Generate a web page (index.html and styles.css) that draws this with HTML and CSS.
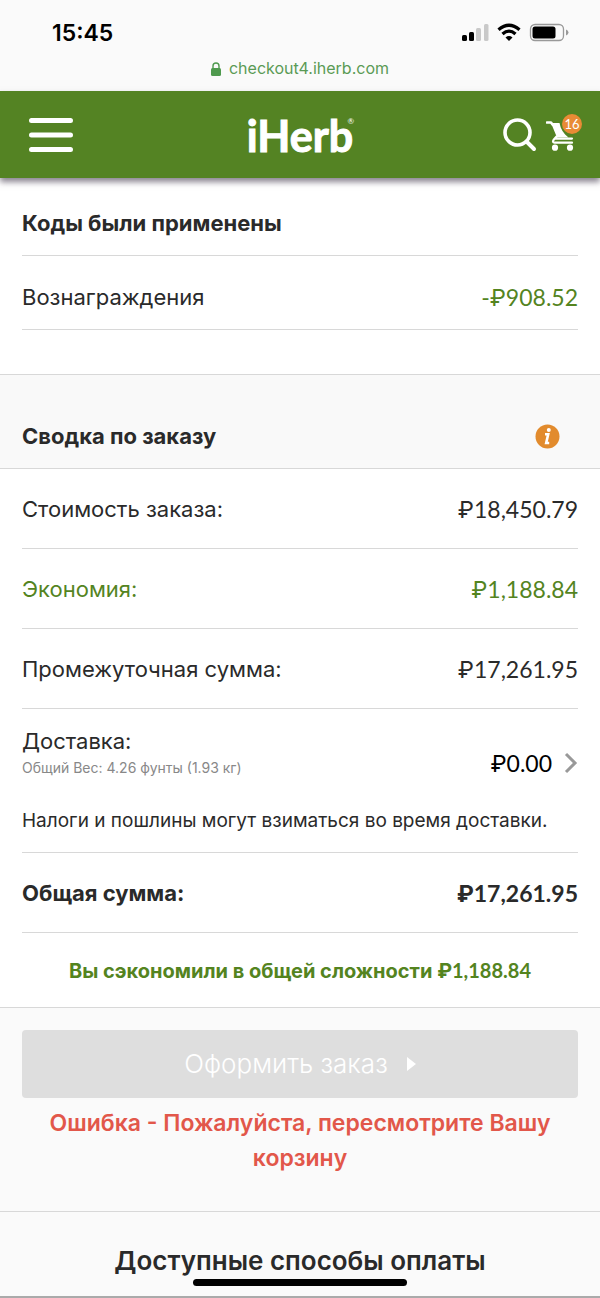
FILE: index.html
```html
<!DOCTYPE html>
<html lang="ru">
<head>
<meta charset="utf-8">
<meta name="viewport" content="width=device-width, initial-scale=1">
<title>iHerb</title>
<link rel="stylesheet" href="styles.css">
</head>
<body>
<div class="device-bar">
  <div class="status">
    <span class="time">15:45</span>
    <svg class="status-icons" width="108" height="20" viewBox="0 0 108 20" aria-hidden="true">
      <rect x="1" y="12" width="5" height="6" rx="1.5"/>
      <rect x="8" y="9" width="5" height="9" rx="1.5"/>
      <g fill="#c9c9c9"><rect x="15" y="5" width="5" height="13" rx="1.5"/><rect x="23" y="1" width="4.500" height="17" rx="1.500"/></g>
      <g fill="none" stroke="#000" stroke-width="3.300"><path d="M37.500 6.800Q48 -2.200 58.500 6.800"/><path d="M41.500 11Q48 5.200 54.500 11"/></g>
      <path d="M44.500 14.400Q48 11.600 51.500 14.400L48 18Z"/>
      <rect x="69.500" y="1.500" width="33" height="16" rx="4.500" fill="none" stroke="#999" stroke-width="1.300"/>
      <rect x="71.500" y="3.500" width="23" height="12" rx="2.500"/>
      <path d="M105 6.500Q107.500 7.500 107.500 9.500T105 12.500Z" fill="#999"/>
    </svg>
  </div>
  <div class="address">
    <svg width="10" height="14" viewBox="0 0 10 14" aria-hidden="true"><rect y="6" width="10" height="8" rx="1.500" fill="#4f9a4e"/><path d="M2 7V4a3 3 0 0 1 6 0v3" fill="none" stroke="#4f9a4e" stroke-width="1.400"/></svg>
    <span>checkout4.iherb.com</span>
  </div>
</div>
<header class="header">
  <button class="icon-button" type="button" aria-label="Меню">
    <svg width="44" height="36" viewBox="0 0 44 36"><path d="M2.500 3.500h39M2.500 18h39M2.500 32.500h39" stroke="#fff" stroke-width="5" stroke-linecap="round"/></svg>
  </button>
  <a class="logo" href="#">iHerb<sup>®</sup></a>
  <div class="tools">
    <button class="icon-button" type="button" aria-label="Поиск">
      <svg width="34" height="34" viewBox="0 0 34 34"><circle cx="14.500" cy="14.500" r="12.500" fill="none" stroke="#fff" stroke-width="3.600"/><path d="M23.500 23.500l7.500 7.500" stroke="#fff" stroke-width="4" stroke-linecap="round"/></svg>
    </button>
    <a class="cart" href="#" aria-label="Корзина">
      <svg width="30" height="32" viewBox="0 0 30 32"><path d="M1 3.500h4l1.500 2" fill="none" stroke="#fff" stroke-width="2.600" stroke-linecap="round" stroke-linejoin="round"/><path d="M5 4h8.500c1 6 4 10.500 9 14.500H11z" fill="#fff"/><path d="M10.500 17.500L7.500 21c-1 1.500-.5 2.700 1 2.700H26M9.500 19.600H26" fill="none" stroke="#fff" stroke-width="2.200" stroke-linecap="round"/><circle cx="9" cy="28.700" r="3.100" fill="#fff"/><circle cx="24" cy="28.700" r="3.100" fill="#fff"/></svg>
      <span class="badge">16</span>
    </a>
  </div>
</header>
<main>
  <section class="codes">
    <h2 class="codes-title">Коды были применены</h2>
    <div class="reward"><span>Вознаграждения</span><span class="amount green">-₽908.52</span></div>
  </section>
  <div class="summary-head">
    <h2>Сводка по заказу</h2>
    <button class="icon-button" type="button" aria-label="Информация">
      <svg width="25" height="25" viewBox="0 0 25 25"><circle cx="12.500" cy="12.500" r="12" fill="#e28b2d"/><circle cx="13.800" cy="6" r="2" fill="#fff"/><path d="M10 10.300h3.200l-2 8.700h3" fill="none" stroke="#fff" stroke-width="2.600"/></svg>
    </button>
  </div>
  <section class="summary">
    <div class="row"><span>Стоимость заказа:</span><span class="amount">₽18,450.79</span></div>
    <div class="row green"><span>Экономия:</span><span class="amount">₽1,188.84</span></div>
    <div class="row"><span>Промежуточная сумма:</span><span class="amount">₽17,261.95</span></div>
    <div class="delivery">
      <div class="delivery-row">
        <div><div>Доставка:</div><div class="weight">Общий Вес: 4.26 фунты (1.93 кг)</div></div>
        <a class="amount delivery-price" href="#">₽0.00
          <svg width="14" height="22" viewBox="0 0 14 22" aria-hidden="true"><path d="M2 2l9 9-9 9" fill="none" stroke="#999" stroke-width="3"/></svg>
        </a>
      </div>
      <p class="note">Налоги и пошлины могут взиматься во время доставки.</p>
    </div>
    <div class="row total"><span>Общая сумма:</span><span class="amount">₽17,261.95</span></div>
    <p class="saved">Вы сэкономили в общей сложности <span class="amount">₽1,188.84</span></p>
  </section>
  <section class="checkout">
    <button class="submit" type="button" disabled>Оформить заказ <svg width="9" height="14" viewBox="0 0 9 14" aria-hidden="true"><path d="M0 0l9 7-9 7z" fill="#fff"/></svg></button>
    <p class="error">Ошибка - Пожалуйста, пересмотрите Вашу корзину</p>
  </section>
  <section class="payment">
    <h2>Доступные способы оплаты</h2>
    <div class="home-indicator"></div>
  </section>
</main>
</body>
</html>
```
FILE: styles.css
```css
* { box-sizing: border-box; }
body {
  margin: 0;
  background: #fff;
  color: #2a2a2a;
  font: 22px/32px Inter, "Noto Sans", sans-serif;
}
h2, p { margin: 0; }
h2 { font-size: 22px; font-weight: 700; }
svg { display: block; flex: none; }
a { color: inherit; text-decoration: none; }
.icon-button { padding: 0; border: 0; background: none; }
.amount { font-family: Lato, Inter, sans-serif; font-size: 23px; }
.green { color: #54841f; }

.device-bar { background: #fafafa; padding: 17px 31px 9px 52px; }
.status { display: flex; justify-content: space-between; align-items: center; color: #000; }
.time { font-size: 23px; font-weight: 600; }
.address {
  display: flex; justify-content: center; align-items: center; gap: 8px;
  margin-top: 6px; padding-right: 21px;
  color: #5a9a55; font-size: 16px; line-height: 27px;
}

.header {
  position: relative;
  display: grid; grid-template-columns: 1fr auto 1fr; align-items: center;
  height: 87px; padding: 0 24px 0 24px;
  background: #548323; color: #fff;
  box-shadow: 0 4px 6px rgba(60, 50, 70, .6);
}
.header > .icon-button { justify-self: start; padding-left: 5px; }
.logo {
  position: relative; padding-top: 3px;
  font: 700 43px/60px Lato, sans-serif;
  -webkit-text-stroke: 1px #fff;
}
.logo sup {
  position: absolute; top: 14px; right: -1px;
  font-size: 8px; line-height: 8px; font-weight: 400;
  -webkit-text-stroke: 0;
}
.tools { display: flex; justify-content: flex-end; align-items: center; gap: 9px; }
.cart { position: relative; }
.badge {
  position: absolute; top: -5px; right: -6px;
  width: 20px; height: 20px; border-radius: 50%;
  background: #e98b35; font: 13px/20px Lato, sans-serif; text-align: center;
}

.codes { padding: 29px 22px 44px; }
.codes-title { padding-bottom: 16px; border-bottom: 1px solid #d8d8d8; }
.reward {
  display: flex; justify-content: space-between;
  padding: 25px 0 16px; border-bottom: 1px solid #d8d8d8;
}
.summary-head {
  display: flex; justify-content: space-between; align-items: center;
  padding: 45px 40px 16px 22px;
  background: #f9f9f9; border: solid #d8d8d8; border-width: 1px 0;
}
.summary { padding: 0 22px; }
.row {
  display: flex; justify-content: space-between;
  padding: 24px 0 23px; border-bottom: 1px solid #d8d8d8;
}
.delivery { padding: 16px 0 15px; border-bottom: 1px solid #d8d8d8; }
.delivery-row { display: flex; justify-content: space-between; align-items: flex-end; }
.delivery-price { display: flex; align-items: center; gap: 12px; color: #000; }
.weight { color: #888; font-size: 14px; line-height: 22px; }
.note { padding-top: 26px; font-size: 19px; }
.total { font-weight: 700; }
.saved { padding: 21px 0 20px; text-align: center; color: #54841f; font-size: 20px; font-weight: 700; }
.saved .amount { font-size: 20px; }

.checkout { padding: 22px 22px 35px; background: #fafafa; border: solid #d8d8d8; border-width: 1px 0; }
.submit {
  display: flex; justify-content: center; align-items: center; gap: 19px;
  width: 100%; padding: 14px 0; border: 0; border-radius: 4px;
  background: #dedede; color: #fff; font: 300 26px/40px Inter, sans-serif;
}
.error { margin-top: 8px; color: #e2574a; font-size: 23px; line-height: 35px; font-weight: 600; text-align: center; }
.payment {
  position: relative; padding: 29px 22px 15px;
  background: #fafafa; border-bottom: 2px solid #aaa; text-align: center;
}
.payment h2 { font-size: 26px; font-weight: 600; line-height: 40px; }
.home-indicator {
  position: absolute; bottom: 10px; left: 50%;
  width: 214px; height: 7px; margin-left: -107px;
  border-radius: 4px; background: #000;
}
```
